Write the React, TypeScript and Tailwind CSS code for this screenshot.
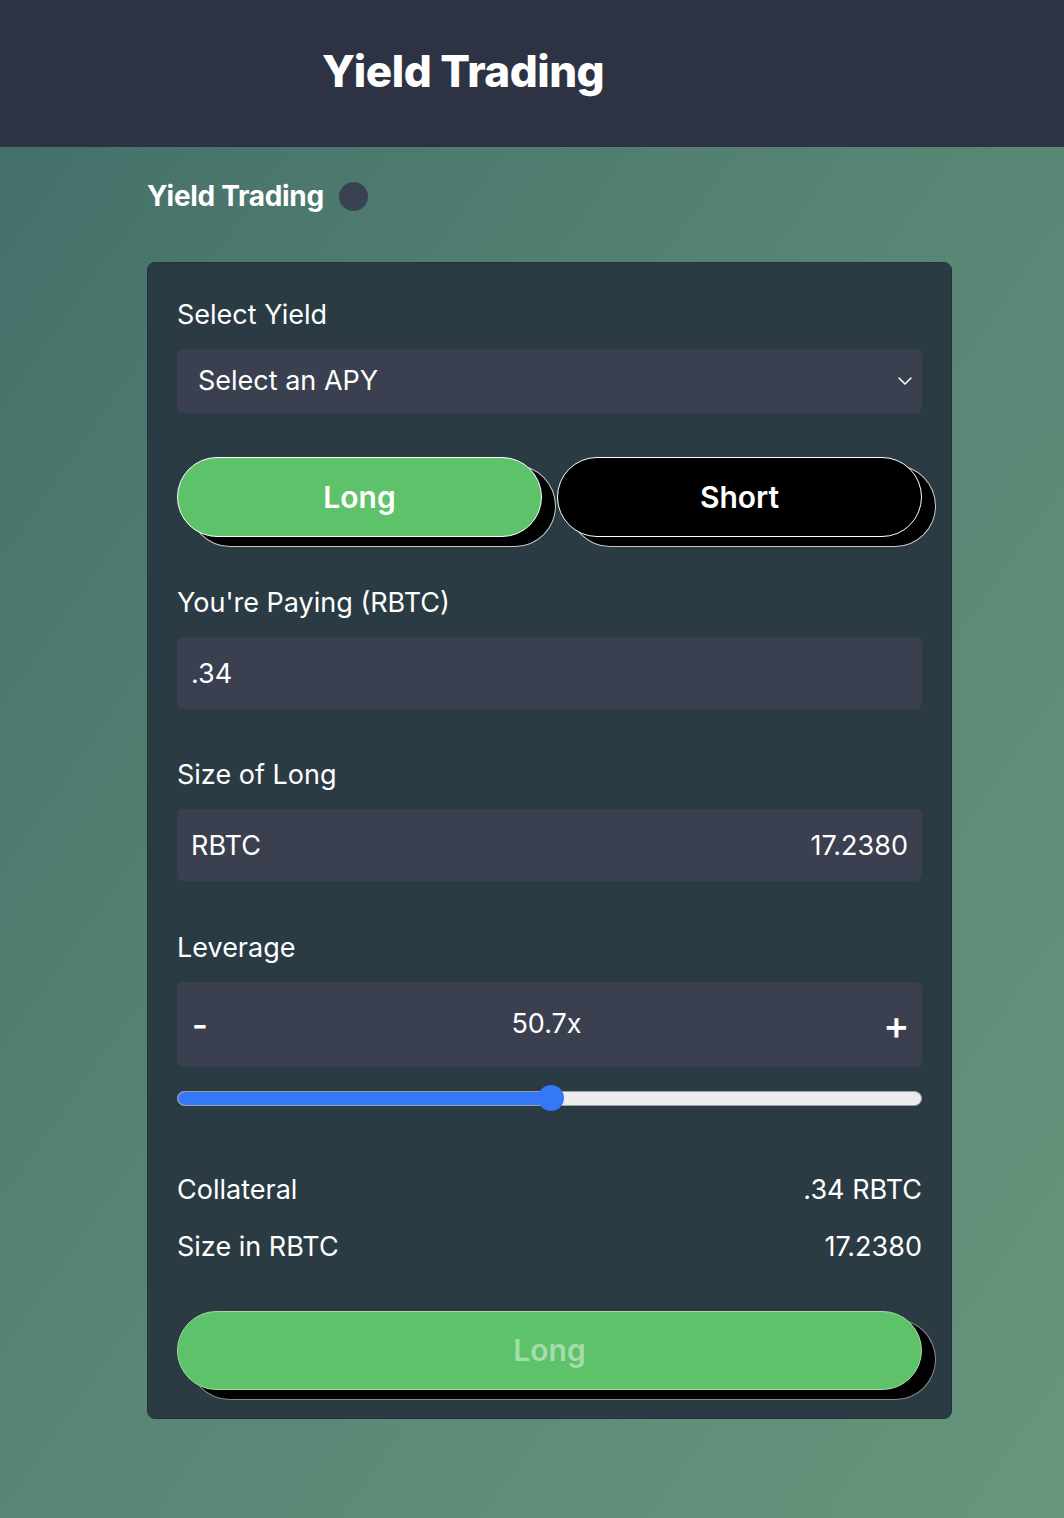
import React, { useState } from "react"
import { ChevronDown } from "lucide-react"

const font = { fontFamily: "Inter, 'Noto Sans', sans-serif" }

export default function App() {
  const [side, setSide] = useState<"long" | "short">("long")
  const [leverage, setLeverage] = useState(50.7)
  const pct = ((leverage - 1) / 99) * 100

  return (
    <div style={font} className="min-h-[1518px] w-full bg-gradient-to-br from-[#436e69] via-[#598575] to-[#66967d] text-white">
      {/* Header */}
      <header className="h-[147px] bg-[#2d3342] flex items-center pl-[322px]">
        <h1 className="text-[44px] font-extrabold tracking-[-0.5px] leading-none pb-[6px]">Yield Trading</h1>
      </header>

      <main className="pl-[147px] pr-[112px] pt-[32px]">
        <div className="flex items-center gap-[15px] h-[34px]">
          <h2 className="text-[28px] font-bold tracking-[-0.3px]">Yield Trading</h2>
          <span className="w-[29px] h-[29px] rounded-full bg-[#3a4150]"></span>
        </div>

        {/* Card */}
        <div className="mt-[49px] bg-[#2a3b43] border border-[#24323a] rounded-[8px] px-[29px] pt-[34px] pb-[28px]">
          <label className="block text-[27px] leading-[36px]">Select Yield</label>
          <div className="mt-[16px] h-[64px] rounded-[6px] bg-[#3a4050] flex items-center justify-between pl-[21px] pr-[5px]">
            <span className="text-[27px]">Select an APY</span>
            <ChevronDown className="w-[24px] h-[24px]" strokeWidth={1.5} />
          </div>

          {/* Long / Short toggle */}
          <div className="mt-[44px] grid grid-cols-2 gap-[15px]">
            <button
              onClick={() => setSide("long")}
              className={`h-[80px] rounded-full border border-white text-[30px] font-semibold shadow-[13px_9px_0_0_#000,13px_9px_0_1px_#c8c8c8] ${side === "long" ? "bg-[#5ec26a]" : "bg-black"}`}
            >
              Long
            </button>
            <button
              onClick={() => setSide("short")}
              className={`h-[80px] rounded-full border border-white text-[30px] font-semibold shadow-[13px_9px_0_0_#000,13px_9px_0_1px_#c8c8c8] ${side === "short" ? "bg-[#5ec26a]" : "bg-black"}`}
            >
              Short
            </button>
          </div>

          <label className="block mt-[48px] text-[27px] leading-[36px]">You're Paying (RBTC)</label>
          <div className="mt-[16px] h-[72px] rounded-[6px] bg-[#3a4050] flex items-center px-[14px] pt-[3px]">
            <span className="text-[27px]">.34</span>
          </div>

          <label className="block mt-[48px] text-[27px] leading-[36px]">Size of Long</label>
          <div className="mt-[16px] h-[72px] rounded-[6px] bg-[#3a4050] flex items-center justify-between px-[14px] pt-[2px]">
            <span className="text-[27px]">RBTC</span>
            <span className="text-[27px]">17.2380</span>
          </div>

          <label className="block mt-[49px] text-[27px] leading-[36px]">Leverage</label>
          <div className="mt-[16px] h-[85px] rounded-[6px] bg-[#3a4050] flex items-center justify-between px-[15px]">
            <button onClick={() => setLeverage((l) => Math.max(1, +(l - 0.1).toFixed(1)))} className="text-[34px] font-semibold w-[24px] text-left leading-none">-</button>
            <span className="text-[27px] pr-[6px]">{leverage.toFixed(1)}x</span>
            <button onClick={() => setLeverage((l) => Math.min(100, +(l + 0.1).toFixed(1)))} className="text-[40px] font-medium w-[24px] leading-none">+</button>
          </div>

          {/* Slider */}
          <div className="relative mt-[18px] h-[26px] flex items-center">
            <div className="w-full h-[15px] rounded-full bg-[#ececec] border border-[#9aa0a6] overflow-hidden">
              <div className="h-full bg-[#3478f6]" style={{ width: `${pct}%` }}></div>
            </div>
            <div
              className="absolute top-0 w-[26px] h-[26px] rounded-full bg-[#3478f6] -translate-x-1/2"
              style={{ left: `${pct}%` }}
            ></div>
          </div>

          <div className="mt-[61px] flex justify-between text-[27px] leading-[36px]">
            <span>Collateral</span>
            <span>.34 RBTC</span>
          </div>
          <div className="mt-[21px] flex justify-between text-[27px] leading-[36px]">
            <span>Size in RBTC</span>
            <span>17.2380</span>
          </div>

          <button className="mt-[46px] w-full h-[79px] rounded-full border border-[#a6dcac] bg-[#5ec26a] text-[30px] font-semibold text-[#a5dcab] shadow-[13px_9px_0_0_#000,13px_9px_0_1px_#8a8a8a]">
            Long
          </button>
        </div>
      </main>
    </div>
  )
}
